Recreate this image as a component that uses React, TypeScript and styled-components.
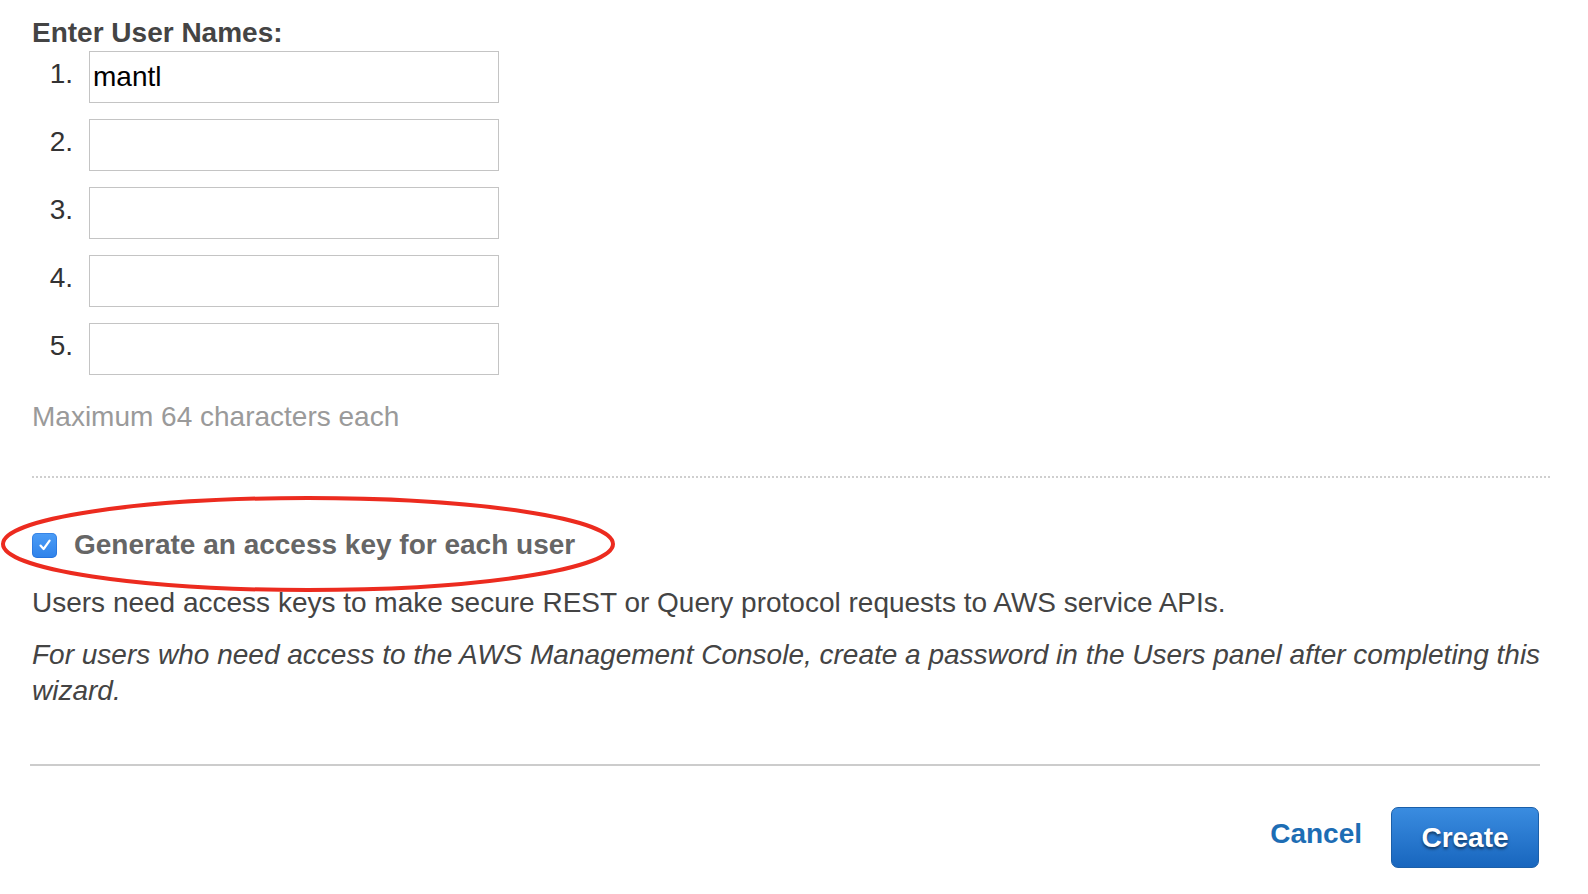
import React from "react";
import styled, { createGlobalStyle } from "styled-components";

const GlobalStyle = createGlobalStyle`
  html, body {
    margin: 0;
    padding: 0;
    background: #ffffff;
  }
  body {
    font-family: "Liberation Sans", Arial, Helvetica, sans-serif;
    -webkit-font-smoothing: antialiased;
  }
  * { box-sizing: border-box; }
`;

const Page = styled.div`
  width: 1588px;
  padding: 17px 38px 0 32px;
  font-size: 28px;
  line-height: 32px;
`;

const Title = styled.h2`
  margin: 0 0 2px;
  font-size: 28px;
  line-height: 32px;
  font-weight: bold;
  color: #444444;
`;

const NameList = styled.ol`
  list-style: none;
  margin: 0;
  padding: 0;
  display: flex;
  flex-direction: column;
  gap: 16px;
`;

const NameRow = styled.li`
  display: flex;
  align-items: flex-start;
`;

const Num = styled.span`
  width: 41px;
  margin-right: 16px;
  padding-top: 7px;
  text-align: right;
  color: #333333;
  line-height: 32px;
`;

const NameInput = styled.input`
  width: 410px;
  height: 52px;
  border: 1px solid #c4c4c4;
  border-radius: 0;
  padding: 0 3px;
  font-family: "Liberation Sans", Arial, sans-serif;
  font-size: 28px;
  color: #000000;
  background: #ffffff;
  outline: none;
`;

const Hint = styled.div`
  margin-top: 26px;
  color: #9a9a9a;
`;

const DottedRule = styled.hr`
  margin: 43px 0 0;
  border: 0;
  border-top: 2px dotted #cfcfcf;
  height: 0;
`;

const CheckRow = styled.label`
  position: relative;
  margin-top: 51px;
  display: flex;
  align-items: center;
  gap: 17px;
`;

const Box = styled.span`
  width: 25px;
  height: 25px;
  border-radius: 5px;
  background: linear-gradient(#4c9df6, #2f82ea);
  box-shadow: inset 0 0 0 1px rgba(20, 90, 200, 0.35);
  display: flex;
  align-items: center;
  justify-content: center;
  flex: none;
`;

const CheckLabel = styled.span`
  font-weight: bold;
  color: #666666;
`;

const Ellipse = styled.svg`
  position: absolute;
  left: -32px;
  top: -34px;
  pointer-events: none;
  overflow: visible;
`;

const Desc = styled.p`
  margin: 26px 0 0;
  color: #444444;
  line-height: 32px;
`;

const Note = styled.p`
  margin: 18px 0 0;
  font-style: italic;
  color: #444444;
  line-height: 36px;
`;

const Divider = styled.hr`
  margin: 55px 10px 0 -2px;
  border: 0;
  border-top: 2px solid #cccccc;
  height: 0;
`;

const Footer = styled.div`
  margin-top: 41px;
  margin-right: 11px;
  display: flex;
  justify-content: flex-end;
  align-items: center;
  gap: 29px;
`;

const CancelLink = styled.button`
  margin-bottom: 8px;
  padding: 0;
  border: 0;
  background: none;
  font-family: "Liberation Sans", Arial, sans-serif;
  font-size: 28px;
  line-height: 32px;
  font-weight: bold;
  color: #1d6db4;
  cursor: pointer;
`;

const CreateButton = styled.button`
  width: 148px;
  height: 61px;
  padding: 0;
  border: 1px solid #1b5fa9;
  border-radius: 7px;
  background: linear-gradient(#3a8ce0, #1866be);
  font-family: "Liberation Sans", Arial, sans-serif;
  font-size: 28px;
  line-height: 32px;
  font-weight: bold;
  color: #ffffff;
  text-shadow: 0 2px 3px rgba(0, 0, 0, 0.55);
  cursor: pointer;
`;

const names = ["mantl", "", "", "", ""];

export default function App() {
  return (
    <>
      <GlobalStyle />
      <Page>
        <Title>Enter User Names:</Title>
        <NameList>
          {names.map((n, i) => (
            <NameRow key={i}>
              <Num>{i + 1}.</Num>
              <NameInput defaultValue={n} />
            </NameRow>
          ))}
        </NameList>
        <Hint>Maximum 64 characters each</Hint>
        <DottedRule />
        <CheckRow>
          <Box>
            <svg width="16" height="16" viewBox="0 0 16 16">
              <path
                d="M3.5 8.6 L6.6 12 L12.6 3.6"
                fill="none"
                stroke="#ffffff"
                strokeWidth="2.2"
                strokeLinecap="round"
                strokeLinejoin="round"
              />
            </svg>
          </Box>
          <CheckLabel>Generate an access key for each user</CheckLabel>
          <Ellipse width="620" height="104" viewBox="0 0 620 104">
            <ellipse
              cx="308"
              cy="49"
              rx="305"
              ry="46"
              fill="none"
              stroke="#ec2b1f"
              strokeWidth="4"
            />
          </Ellipse>
        </CheckRow>
        <Desc>
          Users need access keys to make secure REST or Query protocol requests to AWS service APIs.
        </Desc>
        <Note>
          For users who need access to the AWS Management Console, create a password in the Users panel after completing this wizard.
        </Note>
        <Divider />
        <Footer>
          <CancelLink>Cancel</CancelLink>
          <CreateButton>Create</CreateButton>
        </Footer>
      </Page>
    </>
  );
}
